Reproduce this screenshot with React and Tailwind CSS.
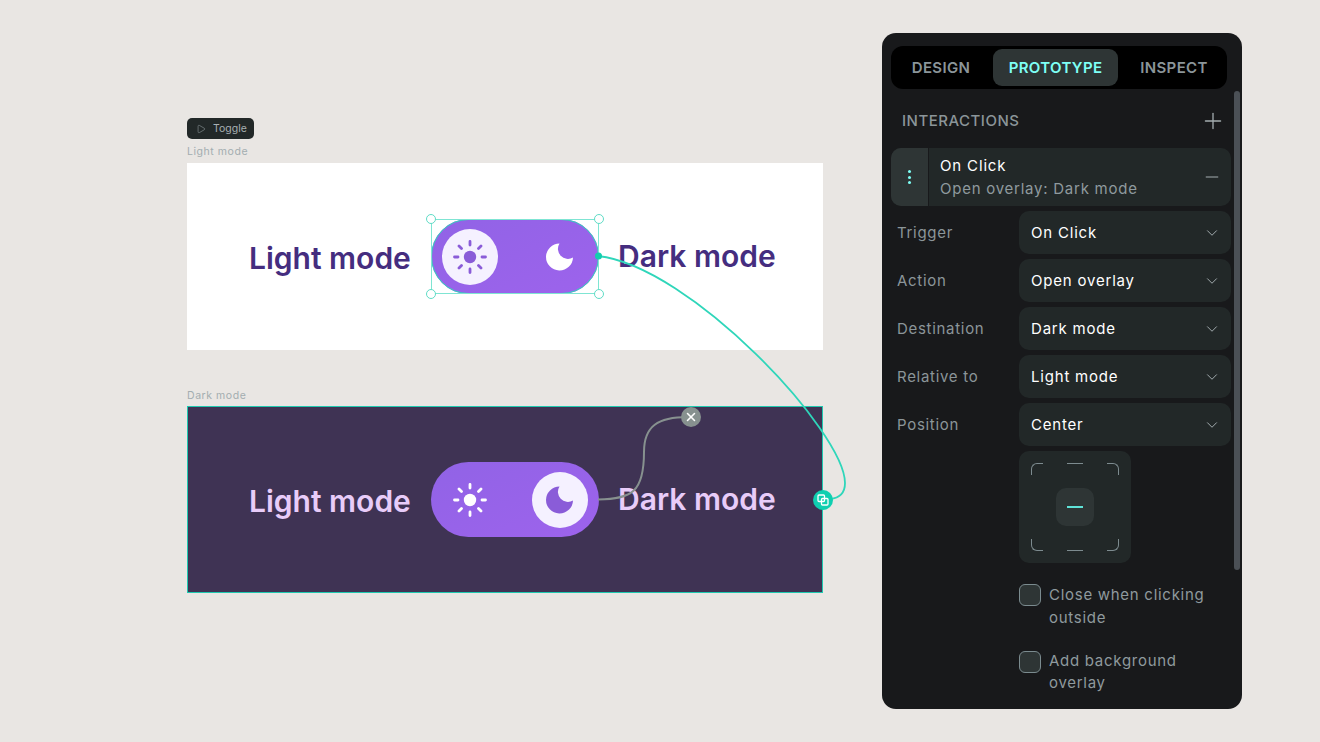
import React from "react";
import { ChevronDown, Plus, Minus, Play, X } from "lucide-react";

const Sun = ({ c, core }) => (
  <svg width="36" height="36" viewBox="0 0 36 36" fill="none">
    <circle cx="18" cy="18" r="6.200" fill={core} />
    <g stroke={c} strokeWidth="2.800" strokeLinecap="round">
      <path d="M18 2.500v3.500M18 30v3.500M2.500 18H6M30 18h3.500M7 7l2.500 2.500M26.500 26.500L29 29M7 29l2.500-2.500M26.500 9.500L29 7" />
    </g>
  </svg>
);

const Moon = ({ c }) => (
  <svg width="28" height="28" viewBox="0 0 28 28">
    <path d="M13.500 0.500A13.500 13.500 0 1 0 27 14.500A10 10 0 0 1 13.500 0.500Z" fill={c} />
  </svg>
);

const Handle = ({ cls }) => (
  <span className={"absolute w-[10px] h-[10px] rounded-full bg-white border border-[#5fdcc6] " + cls} />
);

const Toggle = ({ dark }) => (
  <div className="relative w-[168px] h-[75px] rounded-full bg-gradient-to-br from-[#9163e6] to-[#9d63ec] flex items-center justify-between px-[11px] shrink-0">
    {dark ? (
      <>
        <div className="w-[56px] h-[56px] flex items-center justify-center">
          <Sun c="#ffffff" core="#ffffff" />
        </div>
        <div className="w-[56px] h-[56px] rounded-full bg-[#f5f1ff] flex items-center justify-center">
          <Moon c="#8a5cd8" />
        </div>
      </>
    ) : (
      <>
        <div className="w-[56px] h-[56px] rounded-full bg-[#f5f1ff] flex items-center justify-center">
          <Sun c="#8a5cd8" core="#8a5cd8" />
        </div>
        <div className="w-[56px] h-[56px] flex items-center justify-center">
          <Moon c="#ffffff" />
        </div>
      </>
    )}
  </div>
);

const Frame = ({ dark }) => {
  const text = dark ? "text-[#e8ccf9]" : "text-[#452d7f]";
  return (
    <div
      className={
        "w-[636px] h-[187px] flex items-center " +
        (dark ? "bg-[#3f3354] border border-[#1fc9b0]" : "bg-white")
      }
    >
      <div className={(dark ? "ml-[61px] " : "ml-[62px] ") + "w-[182px] mt-[3px] font-semibold text-[30px] leading-[36px] whitespace-nowrap " + text}>
        Light mode
      </div>
      {dark ? (
        <Toggle dark />
      ) : (
        <div className="relative">
          <Toggle />
          <div className="absolute inset-0 rounded-full border border-[#2fd6ba]" />
          <div className="absolute inset-0 border border-[#7fe5d3]" />
          <Handle cls="left-[-5px] top-[-5px]" />
          <Handle cls="right-[-5px] top-[-5px]" />
          <Handle cls="left-[-5px] bottom-[-5px]" />
          <Handle cls="right-[-5px] bottom-[-5px]" />
        </div>
      )}
      <div className={"ml-[19px] -mt-[1px] font-semibold text-[30px] leading-[36px] whitespace-nowrap " + text}>
        Dark mode
      </div>
    </div>
  );
};

const Field = ({ label, value }) => (
  <div className="flex items-center h-[43px] pl-[6px]">
    <div className="w-[122px] pt-[1px] text-[15px] tracking-[0.7px] text-[#8b9599]">{label}</div>
    <div className="w-[212px] h-[43px] rounded-[10px] bg-[#222828] flex items-center justify-between pl-[12px] pr-[10px] text-[15px] tracking-[0.8px] text-white">
      <span className="pt-[1px]">{value}</span>
      <ChevronDown size={18} strokeWidth={1.300} className="text-[#a4adb0]" />
    </div>
  </div>
);

const Check = ({ a, b, second }) => (
  <div className="flex gap-[8px] pl-[128px]">
    <div className="w-[22px] h-[22px] rounded-[6px] bg-[#2e3535] border border-[#7b8b8f] shrink-0" />
    <div className={(second ? "-mt-[1px] leading-[22px] " : "leading-[22.500px] ") + "text-[15px] tracking-[0.72px] text-[#8f9a9e]"}>
      {a}
      <br />
      {b}
    </div>
  </div>
);

const Corner = ({ cls }) => <span className={"absolute w-[12px] h-[12px] border-[#7d8b8f] " + cls} />;

export default function App() {
  return (
    <div className="relative w-[1320px] h-[742px] overflow-hidden bg-[#e9e6e3] flex font-[Inter,sans-serif]">
      <div className="w-[882px] pl-[187px] pt-[118px] shrink-0">
        <div className="w-[67px] h-[21px] rounded-[5px] bg-[#222828] flex items-center pl-[9px] gap-[7px] text-[10.500px] text-[#a8b0b3]">
          <Play size={10} strokeWidth={1.5} className="text-[#8a9497]" />
          Toggle
        </div>
        <div className="mt-[6px] h-[18px] text-[10.500px] leading-[14px] tracking-[0.55px] text-[#a3adb0]">Light mode</div>
        <Frame />
        <div className="mt-[39px] h-[17px] text-[10.500px] leading-[14px] tracking-[0.55px] text-[#a3adb0]">Dark mode</div>
        <Frame dark />
      </div>

      <svg className="absolute inset-0 pointer-events-none" width="1320" height="742" fill="none">
        <path d="M598 256C690 266 845 432 845 483C845 493 840 498 830 499" stroke="#2fd6ba" strokeWidth="1.800" />
        <path d="M598 499.500C632 499 644 492 644 452C644 426 658 417 688 417" stroke="#87918f" strokeWidth="2" />
        <circle cx="598.500" cy="256" r="3.500" fill="#12cfae" />
      </svg>

      <div className="absolute left-[681px] top-[407px] w-[20px] h-[20px] rounded-full bg-[#87918f] flex items-center justify-center">
        <X size={14} strokeWidth={2.600} className="text-white" />
      </div>
      <div className="absolute left-[813px] top-[490px] w-[20px] h-[20px] rounded-full bg-[#0fcfb0] flex items-center justify-center">
        <svg width="12" height="12" viewBox="0 0 12 12" fill="none" stroke="#fff" strokeWidth="1.300">
          <rect x="1" y="1" width="6.500" height="6.500" rx="1" />
          <rect x="4.500" y="4.500" width="6.500" height="6.500" rx="1" />
        </svg>
      </div>

      <div className="relative mt-[33px] w-[360px] h-[676px] rounded-[14px] bg-[#18191b] pt-[13px] pl-[9px] overflow-hidden">
        <div className="w-[336px] h-[43px] rounded-[12px] bg-black flex items-center pl-[3px] text-[15px] font-semibold tracking-[0.35px]">
          <div className="w-[99px] pr-[5px] pt-[1px] text-center text-[#8b9599]">DESIGN</div>
          <div className="w-[125px] h-[37px] rounded-[9px] bg-[#2e3535] flex items-center justify-center pt-[1px] text-[#7efff5]">PROTOTYPE</div>
          <div className="w-[108px] pl-[4px] pt-[1px] text-center text-[#8b9599]">INSPECT</div>
        </div>

        <div className="h-[59px] flex items-center justify-between pl-[11px] pr-[16px] pt-[5px] text-[15px] font-medium tracking-[0.5px] text-[#8b9599]">
          INTERACTIONS
          <Plus size={26} strokeWidth={1.200} className="text-[#a4adb0]" />
        </div>

        <div className="w-[340px] h-[58px] rounded-[10px] bg-[#222828] flex items-center overflow-hidden">
          <div className="w-[38px] h-full bg-[#2e3535] border-r border-[#18191b] flex flex-col items-center justify-center gap-[2.500px]">
            <span className="w-[3px] h-[3px] rounded-full bg-[#7efff5]" />
            <span className="w-[3px] h-[3px] rounded-full bg-[#7efff5]" />
            <span className="w-[3px] h-[3px] rounded-full bg-[#7efff5]" />
          </div>
          <div className="flex-1 pl-[11px]">
            <div className="text-[15px] leading-[22px] tracking-[0.85px] text-white">On Click</div>
            <div className="text-[15px] leading-[23px] tracking-[0.75px] text-[#8f9a9e]">Open overlay: Dark mode</div>
          </div>
          <Minus size={20} strokeWidth={1.200} className="mr-[9px] text-[#a4adb0]" />
        </div>

        <div className="mt-[5px] flex flex-col gap-[5px]">
          <Field label="Trigger" value="On Click" />
          <Field label="Action" value="Open overlay" />
          <Field label="Destination" value="Dark mode" />
          <Field label="Relative to" value="Light mode" />
          <Field label="Position" value="Center" />
        </div>

        <div className="relative mt-[5px] ml-[128px] w-[112px] h-[112px] rounded-[10px] bg-[#222828] flex items-center justify-center">
          <Corner cls="left-[12px] top-[12px] border-l border-t rounded-tl-[6px]" />
          <Corner cls="right-[12px] top-[12px] border-r border-t rounded-tr-[6px]" />
          <Corner cls="left-[12px] bottom-[12px] border-l border-b rounded-bl-[6px]" />
          <Corner cls="right-[12px] bottom-[12px] border-r border-b rounded-br-[6px]" />
          <span className="absolute left-[48px] top-[12px] w-[16px] h-px bg-[#7d8b8f]" />
          <span className="absolute left-[48px] bottom-[12px] w-[16px] h-px bg-[#7d8b8f]" />
          <div className="w-[38px] h-[38px] rounded-[10px] bg-[#2e3535] flex items-center justify-center">
            <span className="w-[16px] h-[2px] bg-[#5fe3d8]" />
          </div>
        </div>

        <div className="mt-[21px] flex flex-col gap-[22px]">
          <Check a="Close when clicking" b="outside" />
          <Check a="Add background" b="overlay" second />
        </div>

        <div className="absolute left-[352px] top-[58px] w-[6px] h-[479px] rounded-full bg-[#4b5056]" />
      </div>
    </div>
  );
}
